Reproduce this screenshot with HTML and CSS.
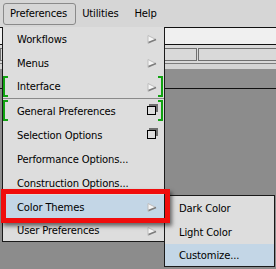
FILE: index.html
```html
<!DOCTYPE html>
<html lang="en">
<head>
    <meta charset="UTF-8">
    <title>Preferences Menu</title>
    <link rel="stylesheet" href="styles.css">
</head>
<body>
    <div class="menubar">
        <span class="menubar-item open">Preferences</span>
        <span class="menubar-item">Utilities</span>
        <span class="menubar-item">Help</span>
    </div>

    <div class="workspace">
        <div class="ws-strip"></div>
        <div class="ws-toolbar">
            <div class="ws-box first"></div>
            <div class="ws-box second"></div>
        </div>
        <div class="ws-light"></div>
        <div class="ws-dark"></div>
    </div>

    <div class="menu main-menu">
        <div class="menu-item">Workflows <svg class="arrow" viewBox="0 0 10 9"><polygon points="1,0.5 9,4.5 1,8.5" fill="#f6f6f6" stroke="#bdbdbd"/><line x1="1.5" y1="7.5" x2="9" y2="4.5" stroke="#7c7c7c" stroke-width="1.4"/></svg></div>
        <div class="menu-item">Menus <svg class="arrow" viewBox="0 0 10 9"><polygon points="1,0.5 9,4.5 1,8.5" fill="#f6f6f6" stroke="#bdbdbd"/><line x1="1.5" y1="7.5" x2="9" y2="4.5" stroke="#7c7c7c" stroke-width="1.4"/></svg></div>
        <div class="menu-item marked sep">Interface <svg class="arrow" viewBox="0 0 10 9"><polygon points="1,0.5 9,4.5 1,8.5" fill="#f6f6f6" stroke="#bdbdbd"/><line x1="1.5" y1="7.5" x2="9" y2="4.5" stroke="#7c7c7c" stroke-width="1.4"/></svg>
            <span class="bracket left"></span><span class="bracket right"></span>
        </div>
        <div class="menu-item marked">General Preferences <svg class="window" viewBox="0 0 11 11"><rect x="2" y="0" width="9" height="8" fill="#6e6e6e"/><rect x="0.5" y="2.5" width="8" height="8" fill="#dddddd" stroke="#000"/></svg>
            <span class="bracket left"></span><span class="bracket right"></span>
        </div>
        <div class="menu-item">Selection Options <svg class="window" viewBox="0 0 11 11"><rect x="2" y="0" width="9" height="8" fill="#6e6e6e"/><rect x="0.5" y="2.5" width="8" height="8" fill="#dddddd" stroke="#000"/></svg></div>
        <div class="menu-item">Performance Options...</div>
        <div class="menu-item">Construction Options...</div>
        <div class="menu-item active">Color Themes <svg class="arrow" viewBox="0 0 10 9"><polygon points="1,0.5 9,4.5 1,8.5" fill="#f6f6f6" stroke="#bdbdbd"/><line x1="1.5" y1="7.5" x2="9" y2="4.5" stroke="#7c7c7c" stroke-width="1.4"/></svg></div>
        <div class="menu-item short">User Preferences <svg class="arrow" viewBox="0 0 10 9"><polygon points="1,0.5 9,4.5 1,8.5" fill="#f6f6f6" stroke="#bdbdbd"/><line x1="1.5" y1="7.5" x2="9" y2="4.5" stroke="#7c7c7c" stroke-width="1.4"/></svg></div>
    </div>

    <div class="menu sub-menu">
        <div class="menu-item">Dark Color</div>
        <div class="menu-item">Light Color</div>
        <div class="menu-item active short">Customize...</div>
    </div>

    <div class="callout"></div>
</body>
</html>
```

FILE: styles.css
```css
body {
    margin: 0;
    background-color: #8c8c8c;
    font-family: "DejaVu Sans", Verdana, sans-serif;
    font-size: 10px;
    letter-spacing: -0.15px;
    color: #000;
    height: 269px;
    overflow: hidden;
}
.menubar {
    display: flex;
    align-items: center;
    background-color: #d6d6d6;
    border-bottom: 1px solid #111;
    box-sizing: border-box;
    height: 28px;
    padding-left: 3px;
}
.menubar-item {
    padding: 0 8px;
    line-height: 20px;
}
.menubar-item.open {
    padding: 0 8px 0 6px;
    border: 1px solid #8a8a8a;
    border-radius: 3px;
    margin-right: -2px;
}
.workspace {
    display: flex;
    flex-direction: column;
}
.ws-strip {
    height: 16px;
    background-color: #f0f0f0;
    border-bottom: 1px solid #111;
}
.ws-toolbar {
    display: flex;
    gap: 1px;
    height: 19px;
    padding-top: 3px;
    box-sizing: border-box;
    background-color: #d9d9d9;
    border-bottom: 1px solid #7c7c7c;
}
.ws-box {
    height: 13px;
    box-sizing: border-box;
    border: 1px solid #707070;
}
.ws-box.first {
    width: 197px;
}
.ws-box.second {
    flex: 1;
    margin-right: -4px;
}
.ws-light {
    height: 5px;
    background-color: #d4d4d4;
}
.ws-dark {
    height: 19px;
    background-color: #8f8f8f;
    border-bottom: 1px solid #111;
}
.menu {
    position: absolute;
    background-color: #dddddd;
    border: 1px solid #1a1a1a;
}
.main-menu {
    left: 2px;
    top: 27px;
    width: 161px;
    border-top: none;
}
.sub-menu {
    left: 164px;
    top: 195px;
    width: 109px;
}
.menu-item {
    position: relative;
    display: flex;
    align-items: center;
    height: 24px;
    padding-left: 14px;
}
.menu-item.sep {
    height: 23px;
    border-bottom: 1px solid #8a8a8a;
}
.menu-item.short {
    height: 22px;
}
.menu-item.active {
    background-color: #c3d6e6;
}
.arrow {
    position: absolute;
    left: 144px;
    top: 8px;
    width: 10px;
    height: 9px;
}
.window {
    position: absolute;
    left: 144px;
    top: 5px;
    width: 11px;
    height: 11px;
}
.bracket {
    position: absolute;
    top: 1px;
    width: 3px;
    height: 17px;
    border: 2px solid #12a312;
}
.bracket.left {
    left: 0px;
    border-right: none;
}
.bracket.right {
    left: 155px;
    border-left: none;
}
.callout {
    position: absolute;
    left: 1px;
    top: 189px;
    width: 159px;
    height: 24px;
    border: 5px solid #f00d0d;
    box-shadow: 2px 3px 4px rgba(0, 0, 0, 0.55);
}
```
